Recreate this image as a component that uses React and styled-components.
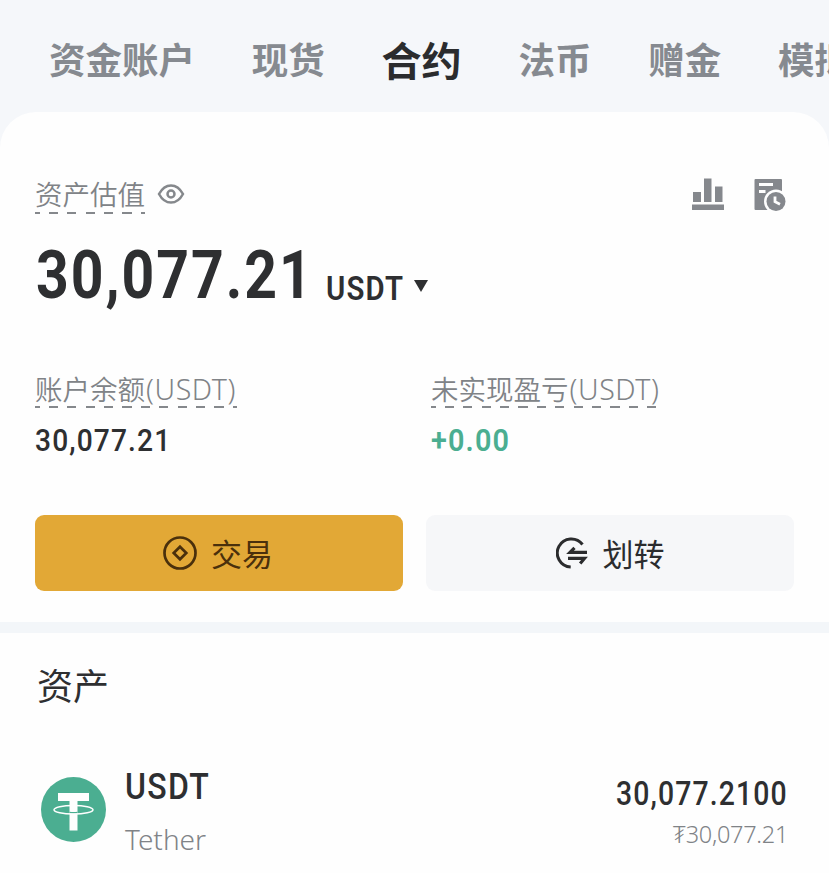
import React from 'react'
import styled, { createGlobalStyle } from 'styled-components'

const GlobalStyle = createGlobalStyle`
  * {
    box-sizing: border-box;
  }

  body {
    margin: 0;
    overflow: hidden;
    background: #fefefe;
    color: #2e2f31;
    font-family: 'Noto Sans', 'Noto Sans CJK SC', sans-serif;
  }

  svg {
    display: block;
    flex: none;
  }
`

const Page = styled.div`
  width: 829px;
  height: 873px;
  overflow: hidden;
  background: #f5f7fa;
`

const Tabs = styled.nav`
  display: flex;
  align-items: center;
  gap: 56.8px;
  height: 112px;
  padding: 6px 0 0 49px;
`

const Tab = styled.a`
  flex: none;
  color: ${props => (props.$active ? '#2b2c2e' : '#868a90')};
  font-family: 'Noto Sans CJK SC', sans-serif;
  font-size: ${props => (props.$active ? '40px' : '36.5px')};
  font-weight: 700;
  line-height: 60px;
  white-space: nowrap;
`

const Card = styled.main`
  height: 761px;
  border-radius: 36px 36px 0 0;
  background: #fefefe;
`

const Overview = styled.section`
  height: 510px;
  padding: 63px 35px 0;
`

const TopRow = styled.div`
  display: flex;
  align-items: flex-start;
  justify-content: space-between;
  height: 70px;
`

const LabelGroup = styled.div`
  display: flex;
  gap: 12px;

  svg {
    margin-top: 8px;
  }
`

const Label = styled.span`
  display: block;
  width: ${props => props.$width};
  height: 39px;
  color: #808387;
  font-family: 'Noto Sans', 'Noto Sans CJK SC', sans-serif;
  font-size: 27.5px;
  font-weight: 350;
  line-height: 40px;
  white-space: nowrap;
  background: repeating-linear-gradient(
      90deg,
      #85888c 0 4.6px,
      transparent 4.6px 13.8px,
      #85888c 13.8px 18.4px
    )
    left bottom / 100% 2.5px no-repeat;
`

const Unit = styled.span`
  padding-left: 1px;
  font-size: 28.5px;
  letter-spacing: 0.6px;
`

const Actions = styled.div`
  display: flex;
  gap: 30px;
  padding: 3px 8px 0 0;
`

/* Narrow DIN-like figures: Roboto squeezed horizontally */
const Figure = styled.span`
  display: block;
  width: max-content;
  font-family: Roboto, sans-serif;
  font-size: ${props => props.$size};
  font-weight: ${props => props.$weight || 500};
  line-height: 1;
  letter-spacing: ${props => props.$spacing || '0.04em'};
  color: ${props => props.$color || 'inherit'};
  transform: scaleX(${props => props.$squeeze || 0.9});
  transform-origin: ${props => props.$origin || 'left'} center;
`

const Total = styled.div`
  display: flex;
  align-items: flex-start;
  height: 124px;
`

const TotalAmount = styled.div`
  width: 291px;
  margin-top: -2px;
  padding-left: 1px;
`

const Currency = styled.div`
  display: flex;
  gap: 0;
  padding-top: 27px;

  svg {
    margin-top: 8px;
  }
`

const Stats = styled.div`
  display: grid;
  grid-template-columns: 396px 1fr;
  height: 146px;
`

const Stat = styled.div`
  display: flex;
  flex-direction: column;
  gap: 16px;
`

const Buttons = styled.div`
  display: grid;
  grid-template-columns: 368px 368px;
  gap: 23px;
`

const Button = styled.button`
  display: flex;
  align-items: center;
  justify-content: center;
  gap: ${props => (props.$primary ? '14px' : '15px')};
  height: 76px;
  padding: 0 ${props => (props.$primary ? '2px' : '0')} 1px 0;
  border: 0;
  border-radius: 9px;
  background: ${props => (props.$primary ? '#e2a836' : '#f6f7f9')};
  color: ${props => (props.$primary ? '#4a300c' : '#2b2c2e')};
  font-family: 'Noto Sans CJK SC', sans-serif;
  font-size: 31px;
  line-height: 46px;
`

const Divider = styled.div`
  height: 11px;
  background: #f3f6f9;
`

const Assets = styled.section`
  padding: 24px 41px 0 37px;
`

const Title = styled.h2`
  margin: 0;
  font-family: 'Noto Sans CJK SC', sans-serif;
  font-size: 36px;
  font-weight: 400;
  line-height: 54px;
`

const AssetRow = styled.div`
  display: flex;
  align-items: flex-start;
  padding: 58px 0 0 4px;

  > svg {
    margin-top: 8px;
  }
`

const AssetName = styled.div`
  flex: 1;
  padding-left: 19px;
`

const AssetValue = styled.div`
  display: flex;
  flex-direction: column;
  align-items: flex-end;
  padding-top: 8px;
`

const Muted = styled.div`
  margin-top: ${props => props.$top};
  color: #808387;
  font-size: ${props => props.$size};
  font-weight: 350;
  line-height: 36px;
  letter-spacing: ${props => props.$spacing || 0};
`

const EyeIcon = () => (
  <svg width="28" height="22" viewBox="0 0 28 22" fill="none" stroke="#85888c" strokeWidth="2.5">
    <path d="M2 11C5 5.4 9 2.4 14 2.4S23 5.4 26 11C23 16.6 19 19.6 14 19.6S5 16.6 2 11Z" />
    <circle cx="14" cy="11" r="3.5" />
  </svg>
)

const ChartIcon = () => (
  <svg width="32" height="32" viewBox="0 0 32 32" fill="#85888d">
    <path d="M1 14h8v10H1zM12 .5h7.5v23.5H12zM23 8.5h7.5V24H23zM0 26.5h32V32H0z" />
  </svg>
)

const RecordIcon = () => (
  <svg width="32" height="34" viewBox="0 0 32 34">
    <rect x=".5" y="1" width="27.5" height="31" rx="1" fill="#85888d" />
    <path d="M5 6.5h14M5 13.5h6.5" stroke="#fefefe" strokeWidth="3" />
    <circle cx="22" cy="23.5" r="12" fill="#fefefe" />
    <circle cx="22" cy="23.5" r="9.5" fill="#85888d" />
    <path d="M21 18.5v5.2l5 2.5" fill="none" stroke="#fefefe" strokeWidth="2.8" />
  </svg>
)

const TradeIcon = () => (
  <svg width="34" height="34" viewBox="0 0 34 34" fill="none" stroke="#4a300c" strokeWidth="2.7">
    <circle cx="17" cy="17" r="15.5" />
    <path d="M17 10.7 23.3 17 17 23.3 10.7 17Z" />
  </svg>
)

const TransferIcon = () => (
  <svg width="32" height="32" viewBox="0 0 32 32" fill="none" stroke="#2b2c2e" strokeWidth="3">
    <path d="M26.5 7.5A14 14 0 1 0 14.7 29.9" />
    <path d="M31 15.4H14L18.5 10.9M12 21.4H28.5L24.2 26.6" strokeWidth="3.2" />
  </svg>
)

const TetherIcon = () => (
  <svg width="65" height="65" viewBox="0 0 65 65">
    <circle cx="32.5" cy="32.5" r="32.5" fill="#4bae91" />
    <path d="M17 16h31v8H36.5v29.5H28.5V24H17Z" fill="#fefefe" />
    <path d="M28.5 35.5q4 .5 8 0" fill="none" stroke="#4bae91" strokeWidth="1.5" />
    <ellipse cx="32.5" cy="32.7" rx="19.5" ry="4.3" fill="none" stroke="#fefefe" strokeWidth="1.5" />
  </svg>
)

const tabs = ['资金账户', '现货', '合约', '法币', '赠金', '模拟']

const App = () => {
  return (
    <>
      <GlobalStyle />
      <Page>
        <Tabs>
          {tabs.map(tab => (
            <Tab key={tab} $active={tab === '合约'}>{tab}</Tab>
          ))}
        </Tabs>
        <Card>
          <Overview>
            <TopRow>
              <LabelGroup>
                <Label $width="110px">资产估值</Label>
                <EyeIcon />
              </LabelGroup>
              <Actions>
                <ChartIcon />
                <RecordIcon />
              </Actions>
            </TopRow>
            <Total>
              <TotalAmount>
                <Figure $size="66px" $weight={700} $squeeze={0.865} $spacing="0.035em">30,077.21</Figure>
              </TotalAmount>
              <Currency>
                <Figure $size="33px" $weight={600} $squeeze={0.89}>USDT</Figure>
                <svg width="14" height="12" viewBox="0 0 14 12" fill="#2e2f31">
                  <path d="M0 0h14L7 12Z" />
                </svg>
              </Currency>
            </Total>
            <Stats>
              <Stat>
                <Label $width="202px">账户余额<Unit>(USDT)</Unit></Label>
                <Figure $size="32px" $squeeze={0.88}>30,077.21</Figure>
              </Stat>
              <Stat>
                <Label $width="227px">未实现盈亏<Unit>(USDT)</Unit></Label>
                <Figure $size="32px" $weight={600} $color="#4bae91">+0.00</Figure>
              </Stat>
            </Stats>
            <Buttons>
              <Button $primary><TradeIcon />交易</Button>
              <Button><TransferIcon />划转</Button>
            </Buttons>
          </Overview>
          <Divider />
          <Assets>
            <Title>资产</Title>
            <AssetRow>
              <TetherIcon />
              <AssetName>
                <Figure $size="36px" $squeeze={0.89}>USDT</Figure>
                <Muted $top="16px" $size="28px">Tether</Muted>
              </AssetName>
              <AssetValue>
                <Figure $size="33px" $squeeze={0.86} $origin="right">30,077.2100</Figure>
                <Muted $top="6px" $size="23.5px" $spacing="-0.3px">₮30,077.21</Muted>
              </AssetValue>
            </AssetRow>
          </Assets>
        </Card>
      </Page>
    </>
  )
}

export default App
